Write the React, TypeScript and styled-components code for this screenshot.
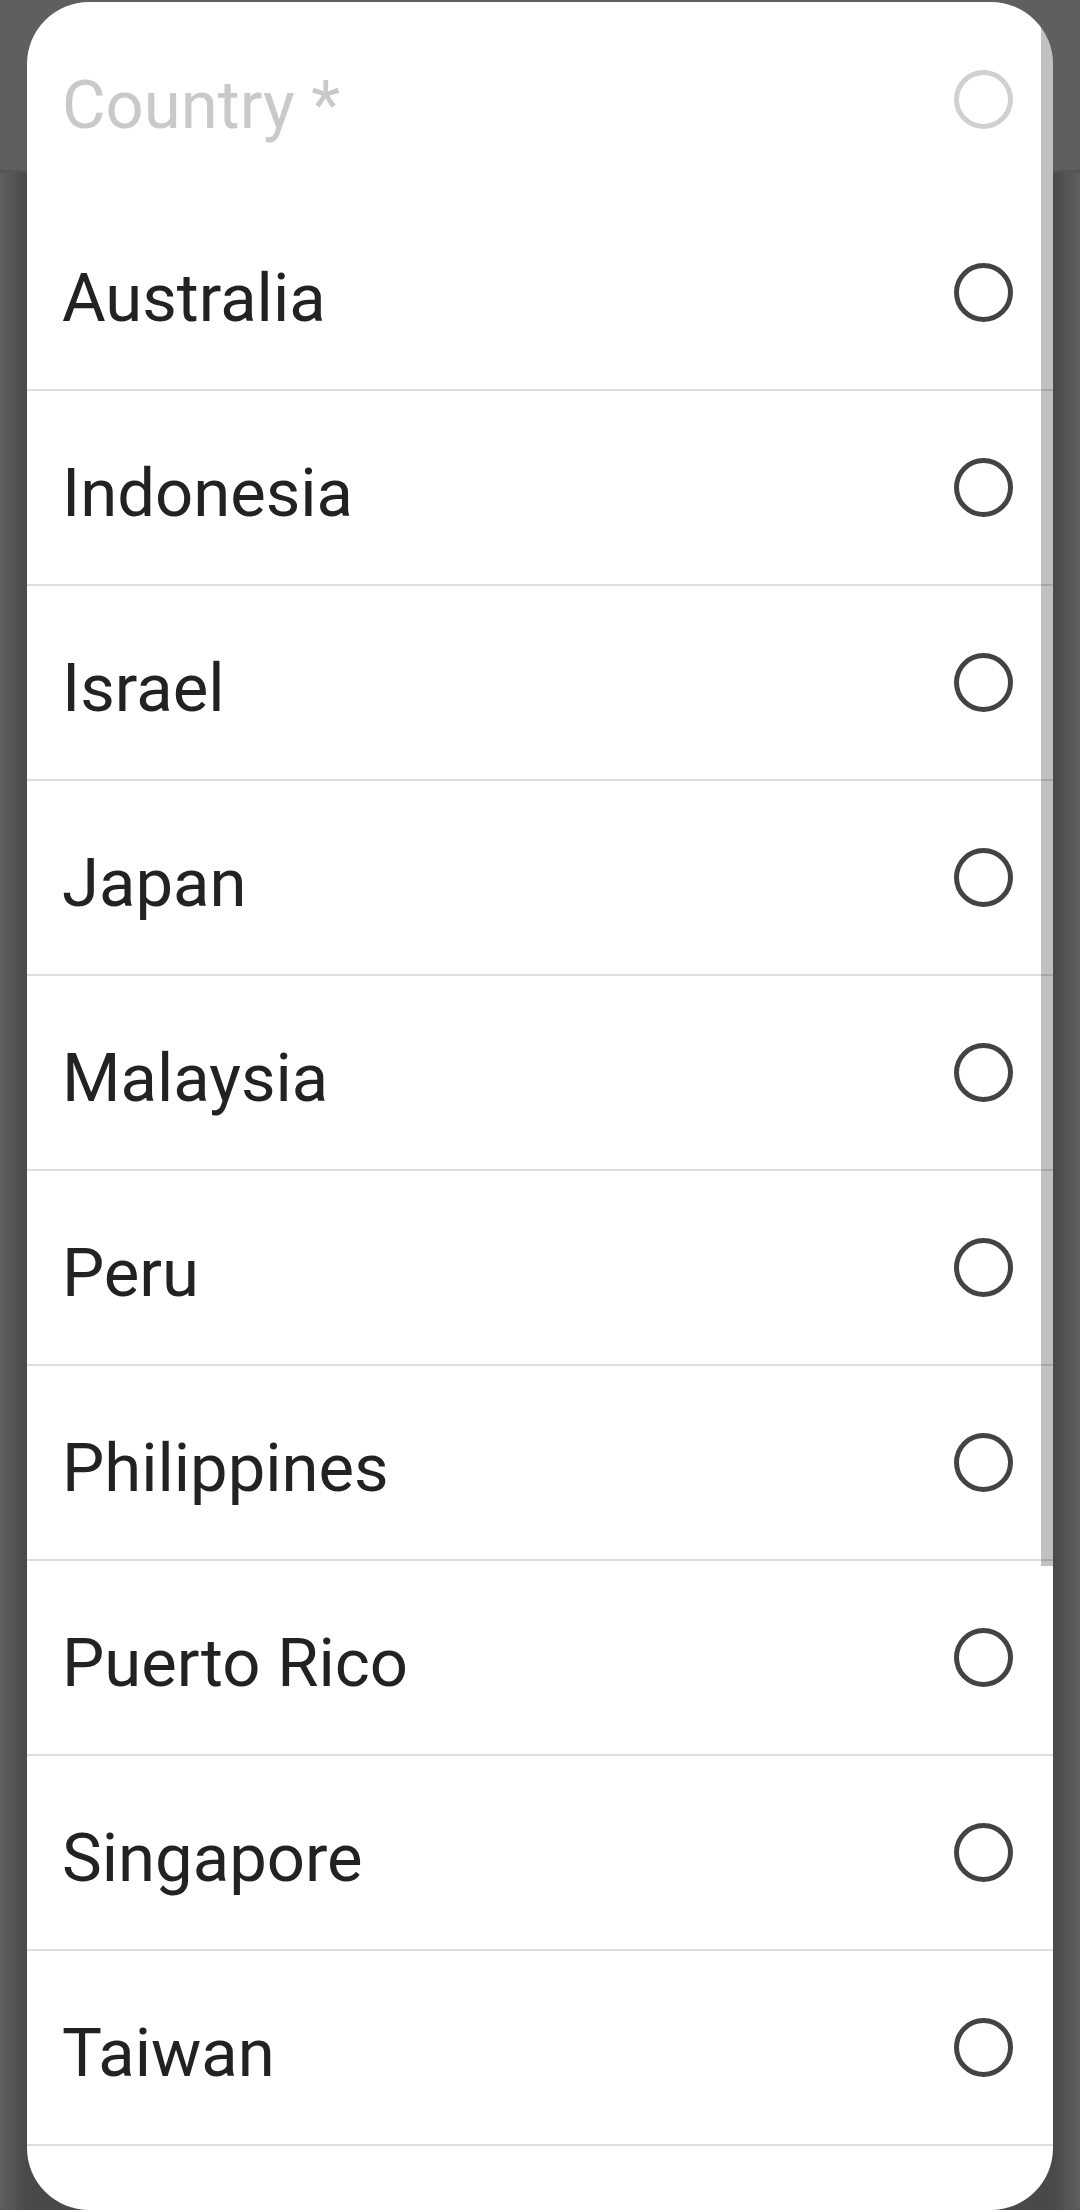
import React from "react";
import styled, { createGlobalStyle } from "styled-components";

const Global = createGlobalStyle`
  html, body {
    margin: 0;
    padding: 0;
    width: 1080px;
    height: 2210px;
    overflow: hidden;
    background: #5f5f5f;
    font-family: Roboto, "Noto Sans", "Liberation Sans", sans-serif;
  }
  * { box-sizing: border-box; }
`;

const Page = styled.div`
  position: relative;
  width: 1080px;
  height: 2210px;
  display: flex;
  flex-direction: column;
`;

const Toolbar = styled.div`
  height: 173px;
  background: #5f5f5f;
  border-bottom: 3px solid #545454;
`;

const PageBody = styled.div`
  flex: 1;
  background: linear-gradient(
    90deg,
    #5f5f5f 0px,
    #494949 27px,
    #494949 1053px,
    #5f5f5f 1080px
  );
`;

const Dialog = styled.div`
  position: absolute;
  left: 27px;
  top: 2px;
  width: 1026px;
  height: 2208px;
  background: #ffffff;
  border-radius: 62px;
  overflow: hidden;
  display: flex;
  flex-direction: column;
`;

const ScrollThumb = styled.div`
  position: absolute;
  right: 0;
  top: 0;
  width: 12px;
  height: 1564px;
  background: rgba(0, 0, 0, 0.245);
`;

const Row = styled.div<{ $header?: boolean }>`
  flex: none;
  height: ${(p) => (p.$header ? "194px" : "195px")};
  display: flex;
  align-items: center;
  justify-content: space-between;
  padding: 0 40px 0 35px;
  border-bottom: ${(p) => (p.$header ? "none" : "2px solid #dedede")};
`;

const Label = styled.span<{ $muted?: boolean }>`
  font-size: 67px;
  line-height: 1;
  padding-top: 12px;
  color: ${(p) => (p.$muted ? "#c9c9c9" : "#222222")};
  white-space: nowrap;
`;

const Radio = styled.span<{ $muted?: boolean }>`
  flex: none;
  width: 59px;
  height: 59px;
  border-radius: 50%;
  border: 5.5px solid ${(p) => (p.$muted ? "#d0d0d0" : "#434343")};
`;

const countries = [
  "Australia",
  "Indonesia",
  "Israel",
  "Japan",
  "Malaysia",
  "Peru",
  "Philippines",
  "Puerto Rico",
  "Singapore",
  "Taiwan",
];

export default function App() {
  return (
    <>
      <Global />
      <Page>
        <Toolbar />
        <PageBody />
        <Dialog>
          <Row $header>
            <Label $muted>Country *</Label>
            <Radio $muted />
          </Row>
          {countries.map((c) => (
            <Row key={c}>
              <Label>{c}</Label>
              <Radio />
            </Row>
          ))}
          <Row />
          <ScrollThumb />
        </Dialog>
      </Page>
    </>
  );
}
